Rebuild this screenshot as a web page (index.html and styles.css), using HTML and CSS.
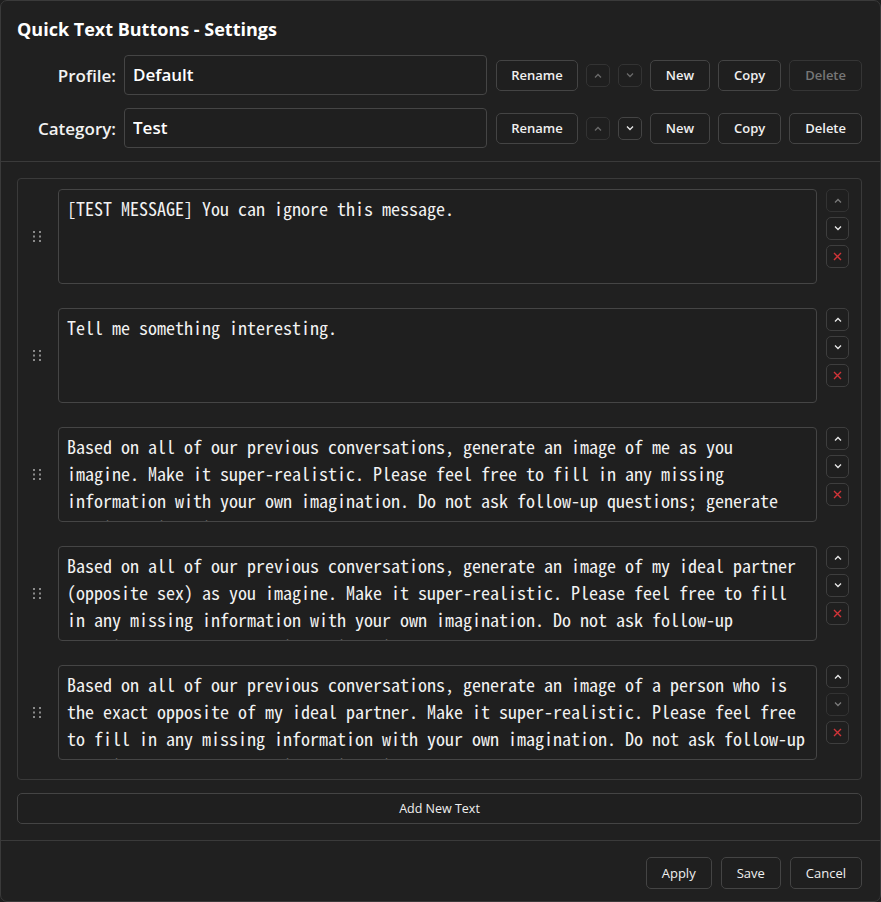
FILE: index.html
```html
<!DOCTYPE html>
<html>
<head>
<meta charset="utf-8">
<title>Quick Text Buttons - Settings</title>
<link rel="stylesheet" href="styles.css">
</head>
<body>
<div class="window">
  <header class="header">
    <h1 class="title">Quick Text Buttons - Settings</h1>
    <div class="form-row">
      <label class="label">Profile:</label>
      <input class="field" type="text" value="Default">
      <div class="btn-group">
        <button class="btn">Rename</button>
        <button class="icon-btn disabled"><svg width="8" height="5" viewBox="0 0 8 5"><polyline points="1,4.5 4,1.5 7,4.5" fill="none" stroke="currentColor" stroke-width="1.3"/></svg></button>
        <button class="icon-btn disabled"><svg width="8" height="5" viewBox="0 0 8 5"><polyline points="1,0.5 4,3.5 7,0.5" fill="none" stroke="currentColor" stroke-width="1.3"/></svg></button>
        <button class="btn wide">New</button>
        <button class="btn wide">Copy</button>
        <button class="btn wide disabled">Delete</button>
      </div>
    </div>
    <div class="form-row">
      <label class="label">Category:</label>
      <input class="field" type="text" value="Test">
      <div class="btn-group">
        <button class="btn">Rename</button>
        <button class="icon-btn disabled"><svg width="8" height="5" viewBox="0 0 8 5"><polyline points="1,4.5 4,1.5 7,4.5" fill="none" stroke="currentColor" stroke-width="1.3"/></svg></button>
        <button class="icon-btn"><svg width="8" height="5" viewBox="0 0 8 5"><polyline points="1,0.5 4,3.5 7,0.5" fill="none" stroke="currentColor" stroke-width="1.3"/></svg></button>
        <button class="btn wide">New</button>
        <button class="btn wide">Copy</button>
        <button class="btn wide">Delete</button>
      </div>
    </div>
  </header>

  <main class="content">
    <div class="text-list">
      <div class="text-item">
        <div class="handle"><svg width="8" height="11" viewBox="0 0 8 11"><g fill="#8a8a8a"><rect x="0" y="0" width="2" height="2"/><rect x="6" y="0" width="2" height="2"/><rect x="0" y="4.5" width="2" height="2"/><rect x="6" y="4.5" width="2" height="2"/><rect x="0" y="9" width="2" height="2"/><rect x="6" y="9" width="2" height="2"/></g></svg></div>
        <textarea class="text-area" spellcheck="false">[TEST MESSAGE] You can ignore this message.</textarea>
        <div class="side-btns">
          <button class="side-btn disabled"><svg width="8" height="5" viewBox="0 0 8 5"><polyline points="1,4.5 4,1.5 7,4.5" fill="none" stroke="currentColor" stroke-width="1.3"/></svg></button>
          <button class="side-btn"><svg width="8" height="5" viewBox="0 0 8 5"><polyline points="1,0.5 4,3.5 7,0.5" fill="none" stroke="currentColor" stroke-width="1.3"/></svg></button>
          <button class="side-btn remove"><svg width="9" height="9" viewBox="0 0 9 9"><path d="M1 1 L8 8 M8 1 L1 8" stroke="currentColor" stroke-width="1.4" fill="none"/></svg></button>
        </div>
      </div>
      <div class="text-item">
        <div class="handle"><svg width="8" height="11" viewBox="0 0 8 11"><g fill="#8a8a8a"><rect x="0" y="0" width="2" height="2"/><rect x="6" y="0" width="2" height="2"/><rect x="0" y="4.5" width="2" height="2"/><rect x="6" y="4.5" width="2" height="2"/><rect x="0" y="9" width="2" height="2"/><rect x="6" y="9" width="2" height="2"/></g></svg></div>
        <textarea class="text-area" spellcheck="false">Tell me something interesting.</textarea>
        <div class="side-btns">
          <button class="side-btn"><svg width="8" height="5" viewBox="0 0 8 5"><polyline points="1,4.5 4,1.5 7,4.5" fill="none" stroke="currentColor" stroke-width="1.3"/></svg></button>
          <button class="side-btn"><svg width="8" height="5" viewBox="0 0 8 5"><polyline points="1,0.5 4,3.5 7,0.5" fill="none" stroke="currentColor" stroke-width="1.3"/></svg></button>
          <button class="side-btn remove"><svg width="9" height="9" viewBox="0 0 9 9"><path d="M1 1 L8 8 M8 1 L1 8" stroke="currentColor" stroke-width="1.4" fill="none"/></svg></button>
        </div>
      </div>
      <div class="text-item">
        <div class="handle"><svg width="8" height="11" viewBox="0 0 8 11"><g fill="#8a8a8a"><rect x="0" y="0" width="2" height="2"/><rect x="6" y="0" width="2" height="2"/><rect x="0" y="4.5" width="2" height="2"/><rect x="6" y="4.5" width="2" height="2"/><rect x="0" y="9" width="2" height="2"/><rect x="6" y="9" width="2" height="2"/></g></svg></div>
        <textarea class="text-area" spellcheck="false">Based on all of our previous conversations, generate an image of me as you imagine. Make it super-realistic. Please feel free to fill in any missing information with your own imagination. Do not ask follow-up questions; generate the image immediately.</textarea>
        <div class="side-btns">
          <button class="side-btn"><svg width="8" height="5" viewBox="0 0 8 5"><polyline points="1,4.5 4,1.5 7,4.5" fill="none" stroke="currentColor" stroke-width="1.3"/></svg></button>
          <button class="side-btn"><svg width="8" height="5" viewBox="0 0 8 5"><polyline points="1,0.5 4,3.5 7,0.5" fill="none" stroke="currentColor" stroke-width="1.3"/></svg></button>
          <button class="side-btn remove"><svg width="9" height="9" viewBox="0 0 9 9"><path d="M1 1 L8 8 M8 1 L1 8" stroke="currentColor" stroke-width="1.4" fill="none"/></svg></button>
        </div>
      </div>
      <div class="text-item">
        <div class="handle"><svg width="8" height="11" viewBox="0 0 8 11"><g fill="#8a8a8a"><rect x="0" y="0" width="2" height="2"/><rect x="6" y="0" width="2" height="2"/><rect x="0" y="4.5" width="2" height="2"/><rect x="6" y="4.5" width="2" height="2"/><rect x="0" y="9" width="2" height="2"/><rect x="6" y="9" width="2" height="2"/></g></svg></div>
        <textarea class="text-area" spellcheck="false">Based on all of our previous conversations, generate an image of my ideal partner (opposite sex) as you imagine. Make it super-realistic. Please feel free to fill in any missing information with your own imagination. Do not ask follow-up questions; generate the image immediately.</textarea>
        <div class="side-btns">
          <button class="side-btn"><svg width="8" height="5" viewBox="0 0 8 5"><polyline points="1,4.5 4,1.5 7,4.5" fill="none" stroke="currentColor" stroke-width="1.3"/></svg></button>
          <button class="side-btn"><svg width="8" height="5" viewBox="0 0 8 5"><polyline points="1,0.5 4,3.5 7,0.5" fill="none" stroke="currentColor" stroke-width="1.3"/></svg></button>
          <button class="side-btn remove"><svg width="9" height="9" viewBox="0 0 9 9"><path d="M1 1 L8 8 M8 1 L1 8" stroke="currentColor" stroke-width="1.4" fill="none"/></svg></button>
        </div>
      </div>
      <div class="text-item">
        <div class="handle"><svg width="8" height="11" viewBox="0 0 8 11"><g fill="#8a8a8a"><rect x="0" y="0" width="2" height="2"/><rect x="6" y="0" width="2" height="2"/><rect x="0" y="4.5" width="2" height="2"/><rect x="6" y="4.5" width="2" height="2"/><rect x="0" y="9" width="2" height="2"/><rect x="6" y="9" width="2" height="2"/></g></svg></div>
        <textarea class="text-area" spellcheck="false">Based on all of our previous conversations, generate an image of a person who is the exact opposite of my ideal partner. Make it super-realistic. Please feel free to fill in any missing information with your own imagination. Do not ask follow-up questions; generate the image immediately.</textarea>
        <div class="side-btns">
          <button class="side-btn"><svg width="8" height="5" viewBox="0 0 8 5"><polyline points="1,4.5 4,1.5 7,4.5" fill="none" stroke="currentColor" stroke-width="1.3"/></svg></button>
          <button class="side-btn disabled"><svg width="8" height="5" viewBox="0 0 8 5"><polyline points="1,0.5 4,3.5 7,0.5" fill="none" stroke="currentColor" stroke-width="1.3"/></svg></button>
          <button class="side-btn remove"><svg width="9" height="9" viewBox="0 0 9 9"><path d="M1 1 L8 8 M8 1 L1 8" stroke="currentColor" stroke-width="1.4" fill="none"/></svg></button>
        </div>
      </div>
    </div>
    <button class="add-btn">Add New Text</button>
  </main>

  <footer class="footer">
    <button class="foot-btn">Apply</button>
    <button class="foot-btn">Save</button>
    <button class="foot-btn">Cancel</button>
  </footer>
</div>
</body>
</html>
```

FILE: styles.css
```css
* {
  box-sizing: border-box;
}

html, body {
  margin: 0;
  padding: 0;
  background: #1f1f1f;
}

body {
  font-family: "Open Sans", "Noto Sans", sans-serif;
  color: #ffffff;
}

.window {
  width: 881px;
  height: 902px;
  border: 1px solid #3a3a3a;
  border-radius: 7px;
  background: #202020;
  display: flex;
  flex-direction: column;
  overflow: hidden;
}

.header {
  padding: 16px 18px 13px 16px;
  border-bottom: 1px solid #3a3a3a;
  display: flex;
  flex-direction: column;
  gap: 13px;
}

.title {
  margin: 0 0 1px 0;
  font-size: 18px;
  line-height: 24px;
  font-weight: 700;
  color: #ffffff;
}

.form-row {
  display: flex;
  align-items: center;
  height: 40px;
}

.label {
  width: 99px;
  text-align: right;
  font-size: 17px;
  font-weight: 600;
  color: #f2f2f2;
  margin-right: 8px;
}

.field {
  flex: 1;
  height: 40px;
  background: #1f1f1f;
  border: 1px solid #454545;
  border-radius: 4px;
  color: #ffffff;
  font-family: inherit;
  font-size: 17px;
  font-weight: 600;
  padding: 0 8px 1px;
  outline: none;
}

.btn-group {
  display: flex;
  align-items: center;
  gap: 8px;
  margin-left: 9px;
}

.btn {
  height: 31px;
  padding: 0 14px;
  background: #1f1f1f;
  border: 1px solid #444444;
  border-radius: 5px;
  color: #f0f0f0;
  font-family: inherit;
  font-size: 13px;
  font-weight: 600;
  cursor: pointer;
}

.btn.wide {
  padding: 0 15px;
}

.btn.disabled {
  color: #777777;
  border-color: #353535;
}

.icon-btn {
  width: 24px;
  height: 23px;
  padding: 0;
  display: flex;
  align-items: center;
  justify-content: center;
  background: #1f1f1f;
  border: 1px solid #444444;
  border-radius: 5px;
  color: #e8e8e8;
}

.icon-btn.disabled {
  color: #6a6a6a;
  border-color: #333333;
}

.content {
  flex: 1;
  padding: 16px 18px 16px 16px;
  border-bottom: 1px solid #3a3a3a;
  display: flex;
  flex-direction: column;
  gap: 13px;
}

.text-list {
  border: 1px solid #3a3a3a;
  border-radius: 4px;
  padding: 10px 12px 19px 0;
  display: flex;
  flex-direction: column;
  gap: 24px;
}

.text-item {
  display: flex;
  align-items: stretch;
  height: 95px;
}

.handle {
  width: 40px;
  display: flex;
  align-items: center;
  justify-content: center;
  padding-right: 2px;
}

.text-area {
  flex: 1;
  height: 95px;
  resize: none;
  overflow: hidden;
  background: #1f1f1f;
  border: 1px solid #454545;
  border-radius: 4px;
  color: #f2f2f2;
  font-family: "Noto Sans Mono CJK JP", "Liberation Mono", monospace;
  font-size: 18px;
  line-height: 27px;
  padding: 5px 8px 0 8px;
  outline: none;
}

.side-btns {
  width: 23px;
  margin-left: 9px;
  display: flex;
  flex-direction: column;
  gap: 5px;
}

.side-btn {
  width: 23px;
  height: 23px;
  padding: 0;
  display: flex;
  align-items: center;
  justify-content: center;
  background: #1f1f1f;
  border: 1px solid #3e3e3e;
  border-radius: 5px;
  color: #e8e8e8;
}

.side-btn.disabled {
  color: #7a7a7a;
  border-color: #333333;
}

.side-btn.remove {
  color: #d13438;
}

.add-btn {
  height: 31px;
  width: 100%;
  background: #1f1f1f;
  border: 1px solid #444444;
  border-radius: 5px;
  color: #f0f0f0;
  font-family: inherit;
  font-size: 12.5px;
}

.footer {
  display: flex;
  justify-content: flex-end;
  gap: 9px;
  padding: 16px 18px 12px;
}

.foot-btn {
  height: 32px;
  padding: 0 15px;
  background: #1f1f1f;
  border: 1px solid #444444;
  border-radius: 5px;
  color: #f0f0f0;
  font-family: inherit;
  font-size: 13px;
}
```
